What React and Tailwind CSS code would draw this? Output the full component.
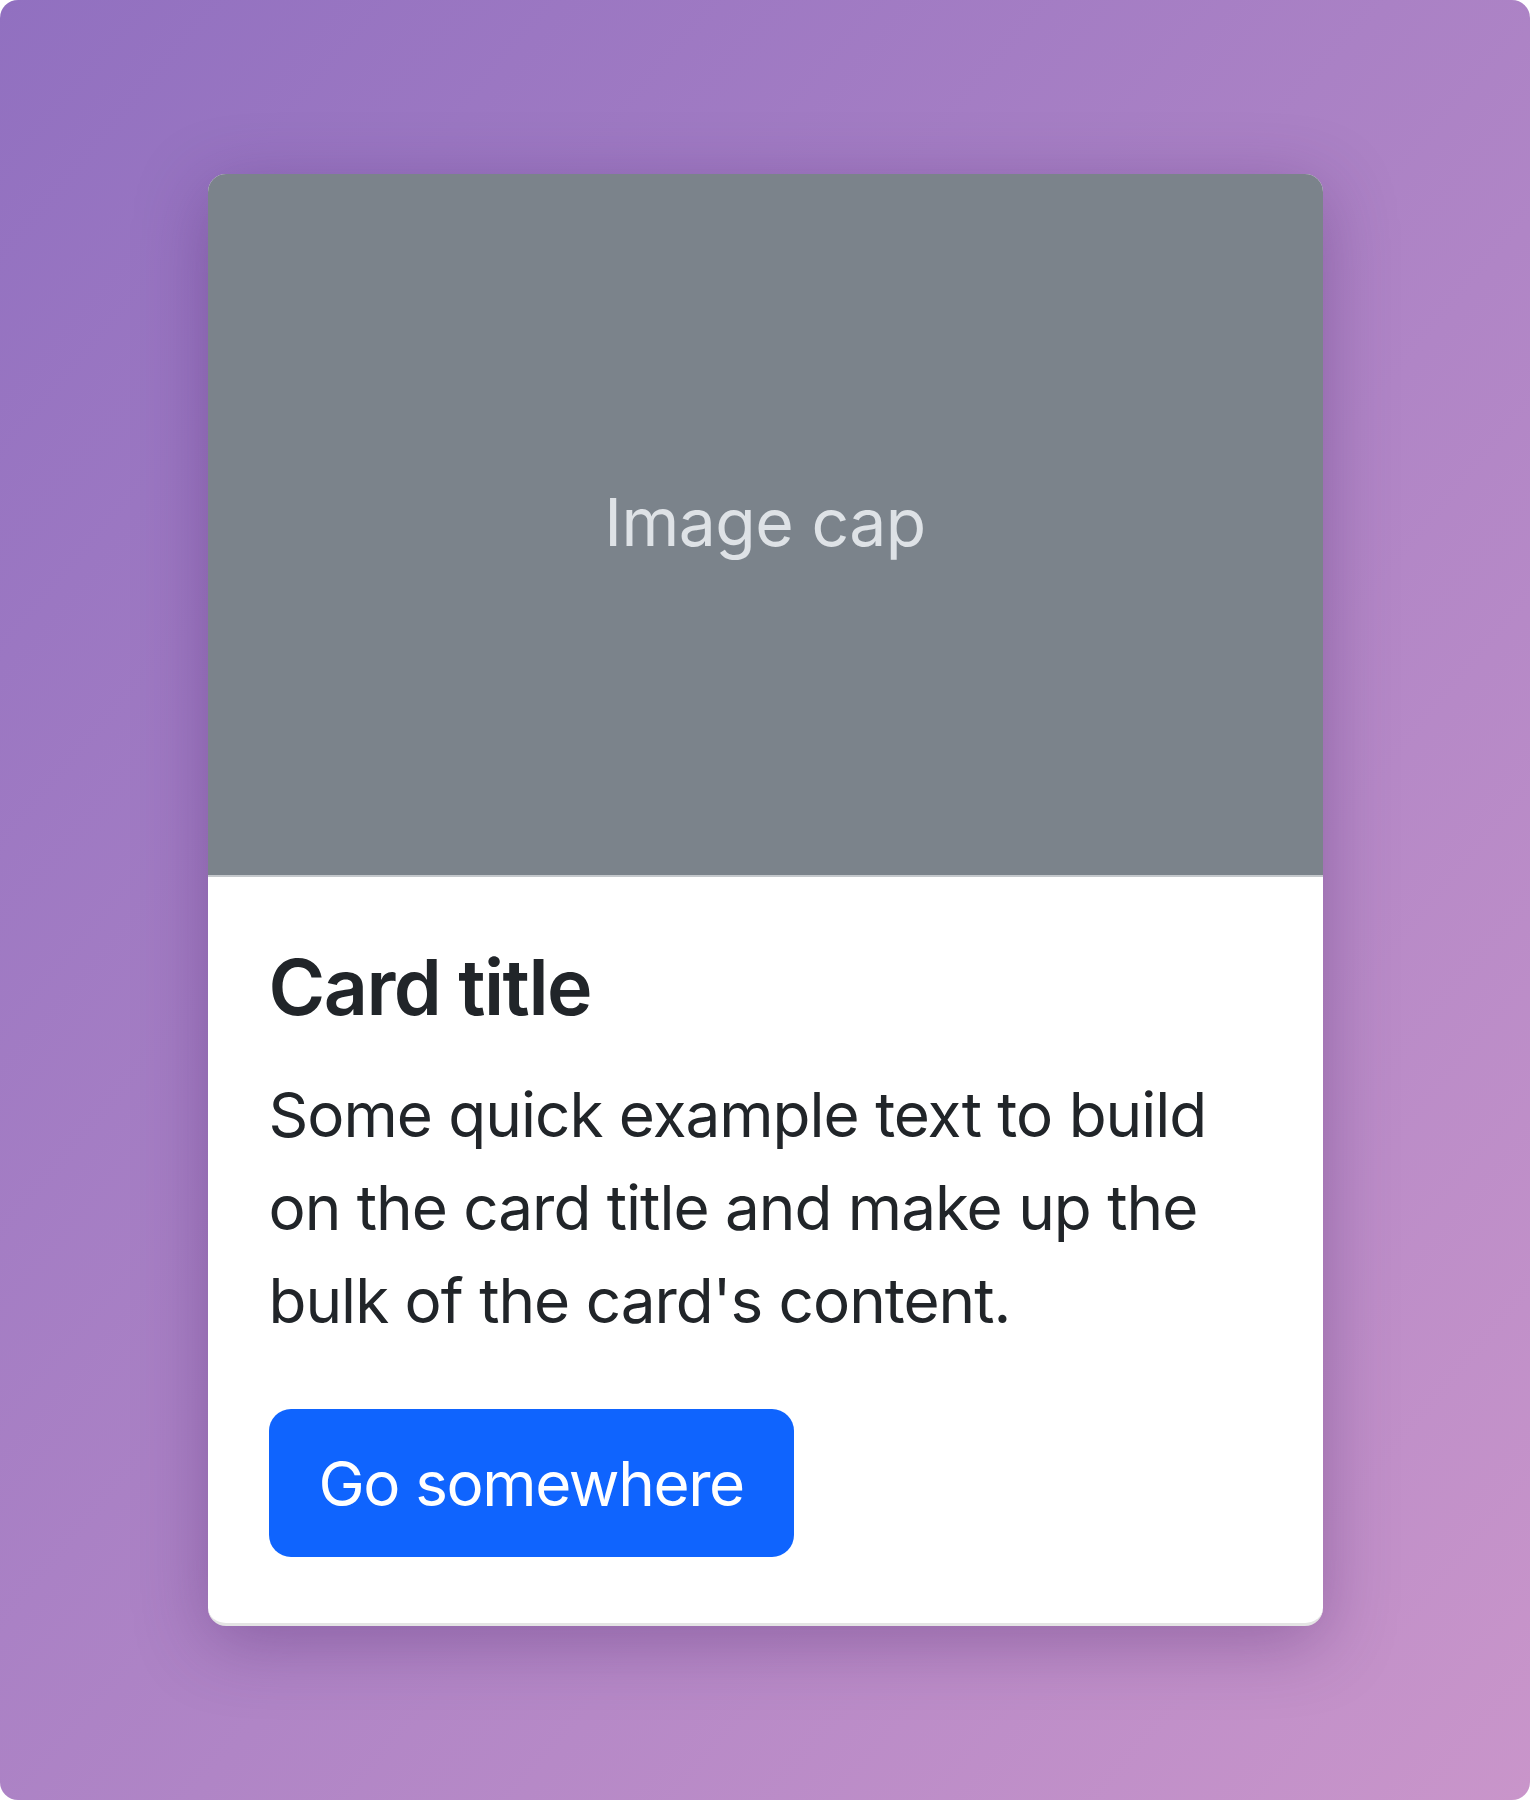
export default function App() {
  return (
    <div className="w-[1530px] h-[1800px] bg-white">
      <div className="w-full h-full rounded-[18px] bg-gradient-to-br from-[#9170c0] to-[#c995ca] flex items-center justify-center font-['Inter','Liberation_Sans',sans-serif]">
        {/* Card */}
        <div className="w-[1115px] bg-white rounded-[18px] overflow-hidden border-b-[3px] border-[#e4e4e4] shadow-[0_16px_70px_rgba(70,30,100,0.35)]">
          <div className="h-[703px] bg-[#7b838b] border-b-2 border-[#c4c8cc] flex items-center justify-center">
            <span className="text-[66px] tracking-[-0.5px] text-[#dee2e6] leading-none -mt-[4px]">Image cap</span>
          </div>
          <div className="px-[61px] pt-[64px] pb-[66px] text-[#212529]">
            <h5 className="text-[77px] leading-[1.2] font-semibold tracking-[-1.5px] mb-[35px]">Card title</h5>
            <p className="text-[62px] leading-[1.5] tracking-[-1px] mb-[62px]">
              Some quick example text to build on the card title and make up the bulk of the card's content.
            </p>
            <button className="h-[148px] px-[50px] rounded-[22px] bg-[#0f64fe] text-white text-[62px] tracking-[-1.4px] leading-[1.5]">
              Go somewhere
            </button>
          </div>
        </div>
      </div>
    </div>
  );
}
